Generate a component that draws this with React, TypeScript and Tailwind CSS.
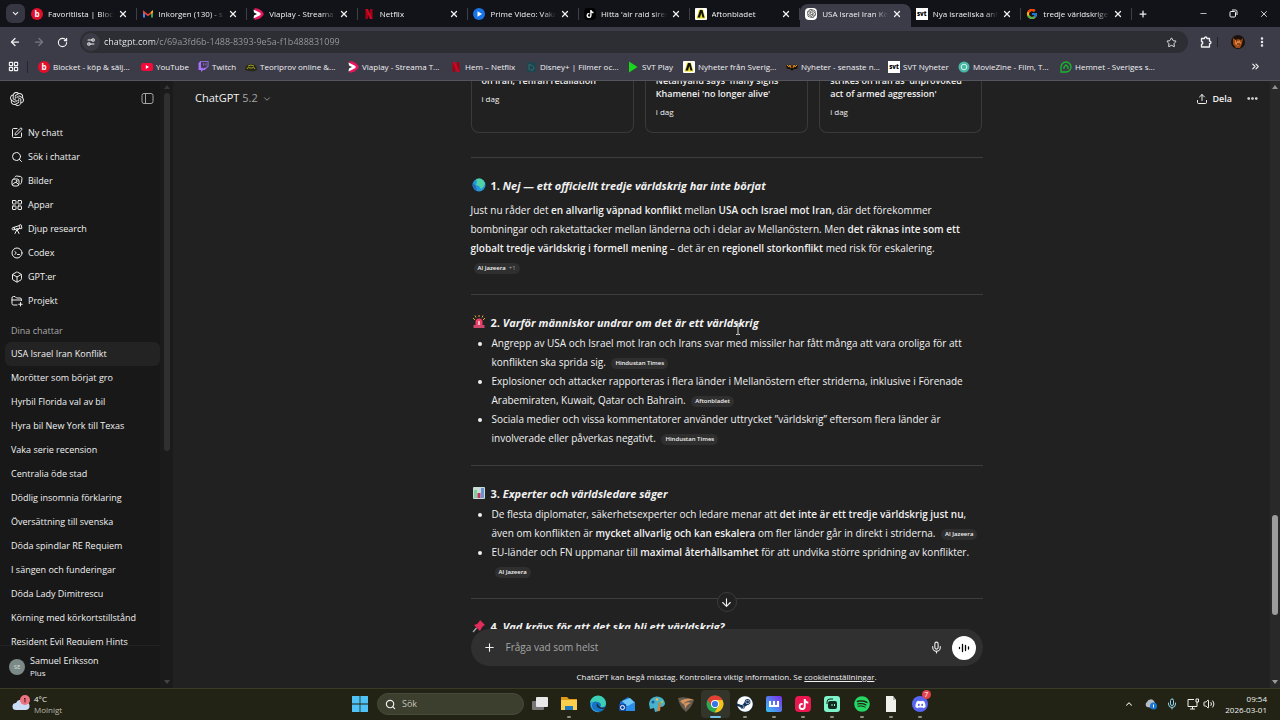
import type { ReactNode } from 'react'
import {
    ArrowDown,
    ArrowLeft,
    ArrowRight,
    Box,
    ChevronDown,
    ChevronUp,
    ChevronsRight,
    Ellipsis,
    EllipsisVertical,
    LayoutGrid,
    Mic,
    Minus,
    Plus,
    RotateCw,
    Search,
    Settings2,
    SquarePen,
    Star,
    Telescope,
    Upload,
    Volume2,
    X,
} from 'lucide-react'
import { FcGoogle } from 'react-icons/fc'
import { FaDiscord, FaSpotify, FaSteam, FaTiktok, FaTwitch } from 'react-icons/fa'
import { SiOpenai } from 'react-icons/si'

type IconName =
    | 'blocket' | 'gmail' | 'viaplay' | 'netflix' | 'prime' | 'tiktok' | 'aftonbladet' | 'chatgpt' | 'svt'
    | 'google' | 'youtube' | 'twitch' | 'teori' | 'disney' | 'svtplay' | 'nyheter' | 'moviezine' | 'hemnet'

type Tab = { title: string, icon: IconName, active?: boolean }
type Bookmark = { title: string, icon: IconName, width: string }

const tabs: Tab[] = [
    { title: 'Favoritlista | Block', icon: 'blocket' },
    { title: 'Inkorgen (130) - s', icon: 'gmail' },
    { title: 'Viaplay - Streama', icon: 'viaplay' },
    { title: 'Netflix', icon: 'netflix' },
    { title: 'Prime Video: Vaka', icon: 'prime' },
    { title: "Hitta 'air raid siren", icon: 'tiktok' },
    { title: 'Aftonbladet', icon: 'aftonbladet' },
    { title: 'USA Israel Iran Ko', icon: 'chatgpt', active: true },
    { title: 'Nya israeliska anf', icon: 'svt' },
    { title: 'tredje världskriget', icon: 'google' },
]

const bookmarks: Bookmark[] = [
    { title: 'Blocket - köp & sälj...', icon: 'blocket', width: 'w-[103px]' },
    { title: 'YouTube', icon: 'youtube', width: 'w-[57px]' },
    { title: 'Twitch', icon: 'twitch', width: 'w-[47px]' },
    { title: 'Teoriprov online &...', icon: 'teori', width: 'w-[102px]' },
    { title: 'Viaplay - Streama T...', icon: 'viaplay', width: 'w-[103px]' },
    { title: 'Hem – Netflix', icon: 'netflix', width: 'w-[75px]' },
    { title: 'Disney+ | Filmer oc...', icon: 'disney', width: 'w-[102px]' },
    { title: 'SVT Play', icon: 'svtplay', width: 'w-[56px]' },
    { title: 'Nyheter från Sverig...', icon: 'aftonbladet', width: 'w-[103px]' },
    { title: 'Nyheter - senaste n...', icon: 'nyheter', width: 'w-[102px]' },
    { title: 'SVT Nyheter', icon: 'svt', width: 'w-[70px]' },
    { title: 'MovieZine - Film, T...', icon: 'moviezine', width: 'w-[102px]' },
    { title: 'Hemnet - Sveriges s...', icon: 'hemnet', width: 'w-[102px]' },
]

const chats = [
    'USA Israel Iran Konflikt',
    'Morötter som börjat gro',
    'Hyrbil Florida val av bil',
    'Hyra bil New York till Texas',
    'Vaka serie recension',
    'Centralia öde stad',
    'Dödlig insomnia förklaring',
    'Översättning till svenska',
    'Döda spindlar RE Requiem',
    'I sängen och funderingar',
    'Döda Lady Dimitrescu',
    'Körning med körkortstillstånd',
    'Resident Evil Requiem Hints',
]

const LineIcon = ({ children }: { children: ReactNode }) => (
    <svg viewBox="0 0 24 24" className="size-3 shrink-0" fill="none" stroke="currentColor" strokeWidth="2" strokeLinecap="round" strokeLinejoin="round">
        {children}
    </svg>
)

const ImagesIcon = () => (
    <LineIcon>
        <rect x="2" y="8" width="14" height="14" rx="4" />
        <path d="M8 4q1-2 3-2l8 1q3 1 3 4l-1 8q0 2-2 3" />
        <path d="M3 19l5-4q2-1 4 1l3 3" />
        <circle cx="11" cy="12" r="1" />
    </LineIcon>
)

const CodexIcon = () => (
    <LineIcon>
        <circle cx="12" cy="12" r="10" />
        <path d="M8 9l2.500 3L8 15M13 15h4" />
    </LineIcon>
)

const ProjectIcon = () => (
    <LineIcon>
        <path d="M12 20H5q-3 0-3-3V6q0-3 3-3h3l3 3h7q3 0 3 3v2M2 10h19M19 15v7M15.500 18.500h7" />
    </LineIcon>
)

const navItems = [
    { label: 'Ny chatt', icon: <SquarePen size={12} strokeWidth={2} /> },
    { label: 'Sök i chattar', icon: <Search size={12} strokeWidth={2} /> },
    { label: 'Bilder', icon: <ImagesIcon /> },
    { label: 'Appar', icon: <LayoutGrid size={12} strokeWidth={2} /> },
    { label: 'Djup research', icon: <Telescope size={12} strokeWidth={2} /> },
    { label: 'Codex', icon: <CodexIcon /> },
    { label: 'GPT:er', icon: <Box size={12} strokeWidth={2} /> },
    { label: 'Projekt', icon: <ProjectIcon /> },
]

const SiteIcon = ({ name }: { name: IconName }) => {
    const base = 'flex size-3 shrink-0 items-center justify-center overflow-hidden'

    switch (name) {
        case 'blocket':
            return <span className={`${base} rounded-full bg-[#e0102a] text-[8px] leading-3 font-bold text-white`}>b</span>
        case 'chatgpt':
            return <span className={`${base} rounded-sm bg-white text-[#222]`}><SiOpenai size={9} /></span>
        case 'tiktok':
            return <span className={`${base} rounded-sm bg-black text-white`}><FaTiktok size={8} /></span>
        case 'svt':
            return <span className={`${base} bg-white text-[6px] leading-[10px] font-extrabold text-black`}>svt</span>
        case 'google':
            return <FcGoogle size={12} className="shrink-0" />
        case 'twitch':
            return <FaTwitch size={11} className="shrink-0 text-[#a970ff]" />
        case 'gmail':
            return (
                <svg viewBox="0 0 12 12" className="size-3 shrink-0">
                    <path d="M1 2.500v7h2v-5" fill="#4285f4" />
                    <path d="M9 4.500v5h2v-7" fill="#34a853" />
                    <path d="M1 2.200l5 4 5-4v2.200L6 8.200 1 4.400z" fill="#ea4335" />
                    <path d="M9 3.800l2-1.600v2.400L9 6z" fill="#fbbc04" />
                </svg>
            )
        case 'viaplay':
            return (
                <svg viewBox="0 0 12 12" className="size-3 shrink-0">
                    <path d="M2 .500q5-1 9.500 4.500v2q-4.500 5.500-9.500 4.500l3-5.500z" fill="#e6155c" />
                    <path d="M1.500 1.500l7 3.500v2l-7 3.500 .500-3L5 6 2 4.500z" fill="#fff" />
                </svg>
            )
        case 'netflix':
            return (
                <svg viewBox="0 0 12 12" className="size-3 shrink-0">
                    <path d="M2.500 1h2.500v10H2.500zM7 1h2.500v10H7z" fill="#a50018" />
                    <path d="M2.500 1h2.500l4.500 10H7z" fill="#d3041d" />
                </svg>
            )
        case 'prime':
            return (
                <svg viewBox="0 0 12 12" className="size-3 shrink-0">
                    <circle cx="6" cy="6" r="6" fill="#1874e8" />
                    <path d="M4.500 3.300v5.400L9 6z" fill="#fff" />
                </svg>
            )
        case 'aftonbladet':
            return (
                <svg viewBox="0 0 12 12" className="size-3 shrink-0">
                    <rect width="12" height="12" rx="1" fill="#fff" />
                    <path d="M1.500 10.500L4 1.500h4l2.500 9z" fill="#e8df1b" />
                    <path d="M2.500 9.500L5 2h2.500L9.500 9.500H7.500L6.300 5 5 9.500z" fill="#111" />
                </svg>
            )
        case 'youtube':
            return (
                <svg viewBox="0 0 12 12" className="size-3 shrink-0">
                    <rect y="2" width="12" height="8" rx="2.500" fill="#f5093a" />
                    <path d="M4.800 4v4L8 6z" fill="#fff" />
                </svg>
            )
        case 'teori':
            return (
                <svg viewBox="0 0 12 12" className="size-3 shrink-0">
                    <path d="M0 9q0-6 6-6t6 6q-6 2.500-12 0z" fill="#26281a" />
                    <path d="M2 8q1-3 3-1h2q2-2 3 1M3 5q3-2 6 0" fill="none" stroke="#a5a01e" />
                </svg>
            )
        case 'disney':
            return (
                <svg viewBox="0 0 12 12" className="size-3 shrink-0">
                    <rect x="2" y="1" width="9" height="10" rx="1" fill="#1e454d" />
                    <path d="M4 4q5 0 5 3t-4 2M4 3v6" fill="none" stroke="#2f6c70" />
                </svg>
            )
        case 'svtplay':
            return (
                <svg viewBox="0 0 12 12" className="size-3 shrink-0">
                    <path d="M2 .500v11L10.500 6z" fill="#17d71b" />
                </svg>
            )
        case 'nyheter':
            return (
                <svg viewBox="0 0 12 12" className="size-3 shrink-0">
                    <path d="M0 4l3 1 1-2 2 3 2-3 1 2 3-1-1 4-3 0-2 2-2-2-3 0z" fill="#191308" />
                    <path d="M1 4l2 2 1-2 1 3M11 4L9 6 8 4 7 7" fill="none" stroke="#ec8b12" />
                </svg>
            )
        case 'moviezine':
            return (
                <svg viewBox="0 0 12 12" className="size-3 shrink-0">
                    <circle cx="6" cy="6" r="5.500" fill="#48b6a4" />
                    <circle cx="6" cy="6" r="2.800" fill="none" stroke="#d3f6ec" />
                </svg>
            )
        case 'hemnet':
            return (
                <svg viewBox="0 0 12 12" className="size-3 shrink-0">
                    <path d="M1 11V6a5 5 0 1 1 5 5z" fill="none" stroke="#19b92c" strokeWidth="1.300" />
                    <path d="M4 8V6l2-2 2 2v2" fill="none" stroke="#19b92c" strokeWidth="1.300" />
                </svg>
            )
    }
}

const TabStrip = () => (
    <div className="flex h-[27px] shrink-0 bg-[#121318]">
        <div className="flex w-[26px] shrink-0 items-center justify-center pl-1">
            <button aria-label="Sök bland flikar" className="flex size-[19px] items-center justify-center rounded-md bg-[#373744]">
                <ChevronDown size={9} strokeWidth={3} />
            </button>
        </div>
        <div role="tablist" className="flex min-w-0 flex-1">
            {tabs.map(({ title, icon, active }) => (
                <div
                    key={title}
                    role="tab"
                    aria-selected={!!active}
                    className={active
                        ? 'mt-1 flex min-w-0 flex-1 items-center rounded-t-lg bg-[#3c3c49] pb-1 pl-[5px]'
                        : 'flex min-w-0 flex-1 items-center pl-[5px]'}
                >
                    <SiteIcon name={icon} />
                    <span className="ml-[5px] min-w-0 flex-1 overflow-hidden text-[8px] whitespace-nowrap [mask-image:linear-gradient(90deg,#000_80%,transparent)]">
                        {title}
                    </span>
                    <button aria-label={`Stäng ${title}`} className="mr-2 ml-1 shrink-0">
                        <X size={10} strokeWidth={3} />
                    </button>
                    <span className={active ? 'h-3 w-px' : 'h-3 w-px bg-[#3f3f48]'} />
                </div>
            ))}
        </div>
        <div className="flex w-[148px] shrink-0 items-center">
            <button aria-label="Ny flik" className="ml-[6px]"><Plus size={10} strokeWidth={3} /></button>
            <div className="ml-auto flex items-center gap-[21px] pr-[11px]">
                <button aria-label="Minimera"><Minus size={9} strokeWidth={2} /></button>
                <button aria-label="Återställ">
                    <svg viewBox="0 0 9 9" className="size-[9px]" fill="none" stroke="currentColor">
                        <rect x="1" y="2.500" width="5.500" height="5.500" rx="1" />
                        <path d="M3 1h3.500a1.500 1.500 0 0 1 1.500 1.500V6" />
                    </svg>
                </button>
                <button aria-label="Stäng"><X size={10} strokeWidth={2} /></button>
            </div>
        </div>
    </div>
)

const Toolbar = () => (
    <div className="flex h-[29px] items-center pt-px">
        <div className="flex w-20 items-center gap-3 pl-[9px]">
            <button aria-label="Bakåt"><ArrowLeft size={12} strokeWidth={2.500} /></button>
            <button aria-label="Framåt" className="text-[#777782]"><ArrowRight size={12} strokeWidth={2.500} /></button>
            <button aria-label="Läs in igen"><RotateCw size={11} strokeWidth={2.500} /></button>
        </div>
        <div className="flex h-[22px] flex-1 items-center rounded-full bg-[#2d2e33] pr-[11px] pl-[2px]">
            <span className="flex size-[18px] items-center justify-center rounded-full bg-[#3b3b45]">
                <Settings2 size={10} strokeWidth={2.500} className="-scale-x-100" />
            </span>
            <input
                aria-label="Adressfält"
                className="ml-1 min-w-0 flex-1 bg-[linear-gradient(90deg,#f3f3f5_51px,#9b9ba1_51px)] bg-clip-text text-[9px] text-transparent outline-none"
                defaultValue="chatgpt.com/c/69a3fd6b-1488-8393-9e5a-f1b488831099"
            />
            <button aria-label="Lägg till bokmärke"><Star size={11} /></button>
        </div>
        <div className="flex w-[92px] items-center pl-3">
            <button aria-label="Tillägg">
                <svg viewBox="0 0 12 12" className="size-3" fill="none" stroke="currentColor" strokeWidth="1.300" strokeLinejoin="round">
                    <path d="M1.500 2.500h3q0-1.500 1.200-1.500t1.200 1.500h2.600v2.700q1.500 0 1.500 1.200T9.500 7.600V11h-8V8.200q1.300 0 1.300-1.300T1.500 5.500z" />
                </svg>
            </button>
            <span className="ml-[5px] h-[10px] w-px bg-[#22222a]" />
            <button aria-label="Profil" className="ml-[13px]">
                <svg viewBox="0 0 14 14" className="size-[14px]">
                    <circle cx="7" cy="7" r="7" fill="#1d120b" />
                    <path d="M2 3l3 2 2-1 3 1 2-2-1 6-2 4H5L2 9z" fill="#9c4a17" />
                    <path d="M4 5l3 1 3-1v3l-3 3-3-2z" fill="#dc7d35" />
                    <path d="M5 6h1M9 6h1M6 9h3" stroke="#401508" />
                </svg>
            </button>
            <button aria-label="Meny" className="ml-[11px]"><EllipsisVertical size={12} strokeWidth={3} /></button>
        </div>
    </div>
)

const BookmarksBar = () => (
    <nav aria-label="Bokmärken" className="flex h-[21px] items-center text-[8px] whitespace-nowrap">
        <button aria-label="Appar" className="ml-2"><LayoutGrid size={11} strokeWidth={2.500} /></button>
        <span className="mr-[10px] ml-[8px] h-3 w-px bg-[#24242c]" />
        {bookmarks.map(({ title, icon, width }) => (
            <a key={title} href="#" className={`flex shrink-0 items-center gap-[3px] ${width}`}>
                <SiteIcon name={icon} />
                {title}
            </a>
        ))}
        <button aria-label="Fler bokmärken" className="mr-[19px] ml-auto"><ChevronsRight size={11} strokeWidth={2.500} /></button>
    </nav>
)

const Sidebar = () => (
    <aside className="flex w-[173px] shrink-0 bg-[#181818]">
        <div className="flex min-w-0 flex-1 flex-col">
            <div className="flex h-[35px] shrink-0 items-center justify-between pr-[6px] pl-[10px]">
                <a href="#" aria-label="ChatGPT"><SiOpenai size={14} /></a>
                <button aria-label="Stäng sidofält" className="text-[#a5a5a5]">
                    <svg viewBox="0 0 13 13" className="size-[13px]" fill="none" stroke="currentColor">
                        <rect x="1" y="1.500" width="11" height="10" rx="2" />
                        <path d="M4.500 1.500v10" />
                    </svg>
                </button>
            </div>
            <nav className="mt-[5px] shrink-0">
                {navItems.map(({ label, icon }) => (
                    <a key={label} href="#" className="flex h-6 items-center gap-[5px] pl-[11px] text-[9px]">
                        {icon}
                        {label}
                    </a>
                ))}
            </nav>
            <h2 className="mt-[9px] h-5 shrink-0 pt-[2px] pl-[11px] text-[9px] text-[#a8a8a8]">Dina chattar</h2>
            <ul className="min-h-0 flex-1 overflow-hidden pl-[5px]">
                {chats.map((chat, index) => (
                    <li key={chat}>
                        <a
                            href="#"
                            className={index === 0
                                ? 'flex h-6 items-center rounded-md bg-[#232323] pl-[6px] text-[9px]'
                                : 'flex h-6 items-center pl-[6px] text-[9px]'}
                        >
                            {chat}
                        </a>
                    </li>
                ))}
            </ul>
            <div className="flex h-[43px] shrink-0 items-center gap-[5px] border-t border-[#222] pl-[9px]">
                <span className="flex size-4 items-center justify-center rounded-full bg-[#7b8a86] text-[6px] text-[#d5dddb]">SE</span>
                <div className="text-[9px] leading-[12px]">
                    <p>Samuel Eriksson</p>
                    <p className="text-[8px]">Plus</p>
                </div>
            </div>
        </div>
        <div className="flex w-[13px] flex-col items-center bg-[#1b1b1b] py-1">
            <svg viewBox="0 0 6 4" className="h-1 w-[6px]"><path d="M0 4l3-4 3 4z" fill="#383838" /></svg>
            <div className="mt-1 w-[6px] flex-1">
                <div className="h-[61%] rounded-full bg-[#303030]" />
            </div>
            <svg viewBox="0 0 6 4" className="h-1 w-[6px]"><path d="M0 0l3 4 3-4z" fill="#444" /></svg>
        </div>
    </aside>
)

const Source = ({ children }: { children: ReactNode }) => (
    <a href="#" className="mx-[3px] inline-flex h-[11px] items-center gap-[3px] rounded-full bg-[#2f2f2f] px-1 align-middle text-[6px] leading-[11px] font-semibold whitespace-nowrap">
        {children}
    </a>
)

const Heading = ({ number, title, children }: { number: string, title: string, children: ReactNode }) => (
    <h3 className="mt-[17px] flex h-5 items-center gap-1 text-[11px] font-bold whitespace-nowrap">
        <svg viewBox="0 0 16 16" className="size-4 shrink-0">{children}</svg>
        <span>{number}. <em>{title}</em></span>
    </h3>
)

const NewsCard = ({ lines }: { lines: string[] }) => (
    <a href="#" className="flex-1 rounded-b-lg border border-t-0 border-[#3a3a3a] px-[10px] pb-[14px] text-[9px] leading-[13px]">
        <span className="block font-semibold whitespace-nowrap">
            {lines.map((line) => <span key={line} className="block">{line}</span>)}
        </span>
        <span className="mt-[5px] block text-[8px]">i dag</span>
    </a>
)

const Strong = ({ children }: { children: ReactNode }) => <strong className="font-semibold">{children}</strong>

const Answer = () => (
    <article className="mx-auto w-full max-w-[512px] text-[10px] leading-[19px]">
        <div className="-mt-[7px] mb-6 flex gap-[11px]">
            <NewsCard lines={['on Iran, Tehran retaliation']} />
            <NewsCard lines={["Netanyahu says 'many signs", "Khamenei 'no longer alive'"]} />
            <NewsCard lines={["strikes on Iran as 'unprovoked", "act of armed aggression'"]} />
        </div>

        <hr className="border-[#3d3d3d]" />
        <Heading number="1" title="Nej — ett officiellt tredje världskrig har inte börjat">
            <circle cx="8" cy="8" r="6.500" fill="#2499dc" />
            <path d="M5 2.200Q9 .500 12 3l2 3-1 3-3 3-2-3-3-1 1-3z" fill="#4fd2a4" />
            <path d="M2 6l3 3 1 5Q2 12 1.600 8z" fill="#276cb9" />
        </Heading>
        <p className="mt-[6px]">
            Just nu råder det <Strong>en allvarlig väpnad konflikt</Strong> mellan <Strong>USA och Israel mot Iran</Strong>, där det förekommer
            bombningar och raketattacker mellan länderna och i delar av Mellanöstern. Men <Strong>det räknas inte som ett
            globalt tredje världskrig i formell mening</Strong> – det är en <Strong>regionell storkonflikt</Strong> med risk för eskalering.
            <br />
            <Source>Al Jazeera <span className="font-normal text-[#a0a0a0]">+1</span></Source>
        </p>

        <hr className="mt-[17px] border-[#3d3d3d]" />
        <Heading number="2" title="Varför människor undrar om det är ett världskrig">
            <path d="M4.500 11V8a3.500 3.500 0 0 1 7 0v3z" fill="#ef3d69" />
            <path d="M2.500 11h11v3h-11z" fill="#cf466d" />
            <path d="M2 4l2 2M8 1v2M14 4l-2 2M4 1.500l1 2M12 1.500l-1 2" stroke="#f2a33a" />
            <path d="M7 7h2v4H7z" fill="#ffb7bb" />
        </Heading>
        <ul className="mt-[2px] list-disc pl-[21px]">
            <li>
                Angrepp av USA och Israel mot Iran och Irans svar med missiler har fått många att vara oroliga för att
                konflikten ska sprida sig. <Source>Hindustan Times</Source>
            </li>
            <li>
                Explosioner och attacker rapporteras i flera länder i Mellanöstern efter striderna, inklusive i Förenade
                Arabemiraten, Kuwait, Qatar och Bahrain. <Source>Aftonbladet</Source>
            </li>
            <li>
                Sociala medier och vissa kommentatorer använder uttrycket ”världskrig” eftersom flera länder är
                involverade eller påverkas negativt. <Source>Hindustan Times</Source>
            </li>
        </ul>

        <hr className="mt-[17px] border-[#3d3d3d]" />
        <Heading number="3" title="Experter och världsledare säger">
            <rect x="2" y="2" width="12" height="12" rx="1" fill="#c9dcd6" />
            <path d="M3 5h3v8H3z" fill="#7fcf96" />
            <path d="M6.500 8h3v5h-3z" fill="#c33263" />
            <path d="M10 3h3v10h-3z" fill="#6d92d3" />
        </Heading>
        <ul className="mt-[2px] list-disc pl-[21px]">
            <li>
                De flesta diplomater, säkerhetsexperter och ledare menar att <Strong>det inte är ett tredje världskrig just nu</Strong>,
                även om konflikten är <Strong>mycket allvarlig och kan eskalera</Strong> om fler länder går in direkt i striderna. <Source>Al Jazeera</Source>
            </li>
            <li>
                EU-länder och FN uppmanar till <Strong>maximal återhållsamhet</Strong> för att undvika större spridning av konflikter.
                <br />
                <Source>Al Jazeera</Source>
            </li>
        </ul>

        <hr className="mt-[17px] border-[#3d3d3d]" />
        <Heading number="4" title="Vad krävs för att det ska bli ett världskrig?">
            <path d="M9 2l5 5-2 1-2 3-1 2-6-6 3-1 2-2z" fill="#e32b5c" />
            <path d="M5.500 10L2 14" stroke="#a9b2ba" strokeWidth="1.200" />
        </Heading>
    </article>
)

const Composer = () => (
    <div className="absolute inset-x-0 bottom-0 flex flex-col items-center bg-[linear-gradient(transparent_50%,#212121_50%)]">
        <button aria-label="Bläddra ned" className="mb-[17px] flex size-5 items-center justify-center rounded-full border border-[#3b3b3b] bg-[#212121]">
            <ArrowDown size={13} strokeWidth={2} />
        </button>
        <form className="flex h-[37px] w-full max-w-[512px] items-center rounded-full bg-[#303030] pr-[7px] pl-3">
            <button type="button" aria-label="Lägg till"><Plus size={13} strokeWidth={2} /></button>
            <input
                aria-label="Meddelande"
                placeholder="Fråga vad som helst"
                className="ml-[10px] min-w-0 flex-1 text-[10px] outline-none placeholder:text-[#a6a6a6]"
            />
            <button type="button" aria-label="Diktera"><Mic size={13} strokeWidth={2} /></button>
            <button type="button" aria-label="Röstläge" className="ml-[9px] flex size-6 items-center justify-center rounded-full bg-white text-black">
                <svg viewBox="0 0 12 12" className="size-3" stroke="currentColor" strokeWidth="1.300" strokeLinecap="round">
                    <path d="M1.500 5.500v1M4.500 2.500v7M7.500 3.500v5M10.500 5v2" />
                </svg>
            </button>
        </form>
        <p className="flex h-[22px] items-center text-[8px]">
            <span>ChatGPT kan begå misstag. Kontrollera viktig information. Se <a href="#" className="underline">cookieinställningar</a>.</span>
        </p>
    </div>
)

const TaskButton = ({ label, state, children }: { label: string, state?: 'open' | 'active', children: ReactNode }) => (
    <button
        aria-label={label}
        className={state === 'active'
            ? 'relative flex h-7 w-[29px] items-center justify-center rounded bg-[#33342a]'
            : 'relative flex h-7 w-[29px] items-center justify-center'}
    >
        {children}
        {state && (
            <span className={state === 'active'
                ? 'absolute bottom-0 h-[2px] w-[11px] rounded-full bg-[#72bfe8]'
                : 'absolute bottom-0 h-[2px] w-1 rounded-full bg-[#8f8f86]'}
            />
        )}
    </button>
)

const Taskbar = () => (
    <footer className="grid h-8 shrink-0 grid-cols-[1fr_590px_1fr] items-center border-t border-[#3a3b27] bg-[#222314] pb-px">
        <button className="flex items-center gap-1 pl-3 text-left text-[8px] leading-[11px]">
            <svg viewBox="0 0 18 18" className="size-[18px]">
                <path d="M4 15a3.500 3.500 0 0 1 0-7 5 5 0 0 1 9-1 4 4 0 0 1 1 8z" fill="#cbdcf6" />
                <circle cx="13" cy="5" r="5" fill="#ef7482" />
                <path d="M12 4l1-1v4.500" fill="none" stroke="#43151b" />
            </svg>
            <span>
                <span className="block">4°C</span>
                <span className="block text-[#b9b9ae]">Molnigt</span>
            </span>
        </button>
        <div className="flex items-center">
            <button aria-label="Start" className="flex w-[30px] justify-center">
                <svg viewBox="0 0 16 16" className="size-4" fill="#4fc3f5">
                    <path d="M0 0h7.600v7.600H0zM8.400 0H16v7.600H8.400zM0 8.400h7.600V16H0zM8.400 8.400H16V16H8.400z" />
                </svg>
            </button>
            <label className="ml-[2px] flex h-[22px] w-[147px] items-center gap-[6px] rounded-full border border-[#484a39] bg-[#3c3e2e] pl-[7px]">
                <Search size={11} strokeWidth={2.500} />
                <input aria-label="Sök" placeholder="Sök" className="w-24 text-[9px] outline-none placeholder:text-[#c4c4bb]" />
            </label>
            <div className="ml-px flex flex-1 justify-between">
                <TaskButton label="Aktivitetsvy">
                    <svg viewBox="0 0 18 18" className="size-[18px]">
                        <rect x="1" y="6" width="12" height="9" rx="1" fill="#777" />
                        <rect x="5" y="2" width="12" height="10" rx="1" fill="#e8e8e8" />
                    </svg>
                </TaskButton>
                <TaskButton label="Utforskaren" state="open">
                    <svg viewBox="0 0 18 18" className="size-[18px]">
                        <path d="M1 2h6l2 2h8v11H1z" fill="#dd9a1d" />
                        <path d="M1 5h16v10H1z" fill="#fbcf4b" />
                        <path d="M5 11h8v4H5z" fill="#1b79c6" />
                    </svg>
                </TaskButton>
                <TaskButton label="Edge">
                    <svg viewBox="0 0 18 18" className="size-[18px]">
                        <circle cx="9" cy="9" r="8" fill="#1674c5" />
                        <path d="M1 8a8 8 0 0 1 16 1q-1 4-6 3 2-2 0-4-3-3-10 0z" fill="#3bd0b4" />
                        <path d="M4 7q-4 8 7 10-7 1-9-5-1-4 2-5z" fill="#34a9e5" />
                        <path d="M8 8q-2 6 7 6l2-2q-5 2-7-1z" fill="#1b2e46" />
                    </svg>
                </TaskButton>
                <TaskButton label="Outlook">
                    <svg viewBox="0 0 18 18" className="size-[18px]">
                        <path d="M2 7l8-5 7 5v9H2z" fill="#1c6ed3" />
                        <path d="M4 6l8-3 5 5-7 4z" fill="#6fc7f5" />
                        <path d="M8 12l9-5v9H8z" fill="#2a8ce9" />
                        <rect x="1" y="9" width="7" height="7" rx="1" fill="#114da3" />
                        <circle cx="4.500" cy="12.500" r="2" fill="none" stroke="#fff" />
                    </svg>
                </TaskButton>
                <TaskButton label="Paint">
                    <svg viewBox="0 0 18 18" className="size-[18px]">
                        <path d="M1 9a8 7 0 0 1 16-1q0 4-5 4l-1 4-4 1-1-4-4 1z" fill="#47b2cf" />
                        <path d="M9 16l2-9 2 0-1 9z" fill="#d1823c" />
                        <circle cx="5" cy="7" r="1.500" fill="#1f5e92" />
                        <circle cx="9" cy="4.500" r="1.300" fill="#f2bd42" />
                        <circle cx="14" cy="7" r="1.300" fill="#7bd85c" />
                    </svg>
                </TaskButton>
                <TaskButton label="Spel">
                    <svg viewBox="0 0 18 18" className="size-[18px]">
                        <path d="M1 3q8-2 16 2-2 7-8 12Q2 11 1 3z" fill="#635b50" />
                        <path d="M3 6q7-4 14-1-7 0-11 4 5-3 8-1-4 1-6 6 0-5-2-5z" fill="#d9935f" />
                    </svg>
                </TaskButton>
                <TaskButton label="Chrome" state="active">
                    <svg viewBox="0 0 18 18" className="size-[18px]">
                        <circle cx="9" cy="9" r="8.500" fill="#2da94f" />
                        <path d="M1.600 4.800A8.500 8.500 0 0 1 16.400 4.800L12.500 9 9 5z" fill="#e63e32" />
                        <path d="M1.600 4.800L5.500 11 9 5z" fill="#e63e32" />
                        <path d="M9 5h7.400A8.500 8.500 0 0 1 8.500 17.500L12.500 11z" fill="#fbc116" />
                        <circle cx="9" cy="9" r="4" fill="#fff" />
                        <circle cx="9" cy="9" r="3.100" fill="#3577e5" />
                    </svg>
                </TaskButton>
                <TaskButton label="Steam" state="open">
                    <span className="rounded-full bg-[#14365e] text-white"><FaSteam size={16} /></span>
                </TaskButton>
                <TaskButton label="Wondershare" state="open">
                    <svg viewBox="0 0 16 16" className="size-4">
                        <defs>
                            <linearGradient id="purple" x1="0" x2="1" y1="1" y2="0">
                                <stop stopColor="#35c6f3" />
                                <stop offset="1" stopColor="#7b2be8" />
                            </linearGradient>
                        </defs>
                        <rect width="16" height="16" rx="2" fill="url(#purple)" />
                        <path d="M4 5v5h8V5M8 5v5" fill="none" stroke="#fff" strokeWidth="2" />
                    </svg>
                </TaskButton>
                <TaskButton label="TikTok Live Studio" state="open">
                    <span className="flex size-4 items-center justify-center rounded-sm bg-[#e9184f] text-white"><FaTiktok size={11} /></span>
                </TaskButton>
                <TaskButton label="Streamlabs" state="open">
                    <svg viewBox="0 0 16 16" className="size-4">
                        <rect width="16" height="16" rx="3" fill="#7ff3c9" />
                        <rect x="4" y="5" width="9" height="8" rx="2" fill="#13291f" />
                        <path d="M3 8V6a3 3 0 0 1 3-3h3" fill="none" stroke="#13291f" />
                        <path d="M8 8v2M10.500 8v2" stroke="#7ff3c9" />
                    </svg>
                </TaskButton>
                <TaskButton label="Spotify" state="open"><FaSpotify size={16} className="text-[#25d865]" /></TaskButton>
                <TaskButton label="Dokument" state="open">
                    <svg viewBox="0 0 16 16" className="size-4">
                        <path d="M3 0h7l3 4v12H3z" fill="#f1f1ec" />
                        <path d="M10 0v4h3z" fill="#b5b5b0" />
                    </svg>
                </TaskButton>
                <TaskButton label="Discord" state="open">
                    <span className="flex size-4 items-center justify-center rounded-full bg-[#5865f2] text-white"><FaDiscord size={11} /></span>
                    <span className="absolute top-0 right-1 flex size-[9px] items-center justify-center rounded-full bg-[#e0434c] text-[7px] leading-[9px] text-white">7</span>
                </TaskButton>
            </div>
        </div>
        <div className="flex items-center justify-end pr-[13px]">
            <button aria-label="Visa dolda ikoner"><ChevronUp size={10} strokeWidth={2.500} /></button>
            <svg viewBox="0 0 12 12" className="ml-[11px] size-3">
                <path d="M2 9a3 3 0 0 1 0-5 4 4 0 0 1 7-1l2 4-3 3z" fill="#b3bcc4" />
                <circle cx="8.500" cy="8" r="3.500" fill="#1674d4" />
                <path d="M8.500 6.500v3" stroke="#fff" />
            </svg>
            <Mic size={12} strokeWidth={2} className="ml-[9px] text-[#8fd3ea]" />
            <svg viewBox="0 0 12 12" className="ml-[9px] size-3" fill="none" stroke="currentColor">
                <path d="M7 1.500H1v7h9V6M3 11h5M5.500 8.500V11M9 1h2.500v3H9zM10 4v2" />
            </svg>
            <Volume2 size={12} strokeWidth={2} className="ml-[4px]" />
            <time className="ml-[10px] w-[42px] text-right text-[8px] leading-[11px] whitespace-nowrap">
                <span className="block">09:54</span>
                <span className="block">2026-03-01</span>
            </time>
        </div>
    </footer>
)

const App = () => {
    return (
        <div className="flex h-screen flex-col overflow-hidden bg-[#212121] font-['Open_Sans','Noto_Sans',sans-serif] text-[#f1f1f1]">
            <TabStrip />
            <div className="h-[54px] shrink-0 border-b border-[#55555e] bg-[#3c3c49]">
                <Toolbar />
                <BookmarksBar />
            </div>

            <div className="flex min-h-0 flex-1">
                <Sidebar />
                <main className="relative min-w-0 flex-1 overflow-hidden">
                    <Answer />
                    <header className="absolute inset-x-0 top-0 flex h-[35px] items-center pr-[21px] pl-[22px]">
                        <button className="flex items-center gap-1 text-[11px]">
                            <span>ChatGPT <span className="text-[#a5a5a5]">5.2</span></span>
                            <ChevronDown size={10} className="text-[#a5a5a5]" />
                        </button>
                        <button className="ml-auto flex items-center gap-1 text-[9px] font-semibold">
                            <Upload size={12} strokeWidth={2} />
                            Dela
                        </button>
                        <button aria-label="Fler alternativ" className="ml-[14px]"><Ellipsis size={13} strokeWidth={3} /></button>
                    </header>
                    <Composer />
                    <div className="absolute inset-y-0 right-0 flex w-[10px] flex-col items-center justify-between bg-[#292929] py-1">
                        <svg viewBox="0 0 6 4" className="h-1 w-[6px]"><path d="M0 4l3-4 3 4z" fill="#929292" /></svg>
                        <div className="flex w-[6px] flex-1 flex-col">
                            <div className="h-[72%]" />
                            <div className="h-[17%] rounded-full bg-[#9c9c9c]" />
                        </div>
                        <svg viewBox="0 0 6 4" className="h-1 w-[6px]"><path d="M0 0l3 4 3-4z" fill="#9c9c9c" /></svg>
                    </div>
                    {/* text cursor */}
                    <svg viewBox="0 0 6 12" className="absolute top-[242px] left-[562px] h-3 w-[6px]" fill="none" stroke="#ddd">
                        <path d="M1 .500h1.500L3 1l.500-.500H5M3 1v10M1 11.500h1.500L3 11l.500.500H5" />
                    </svg>
                </main>
            </div>
            <Taskbar />
        </div>
    )
}

export default App
